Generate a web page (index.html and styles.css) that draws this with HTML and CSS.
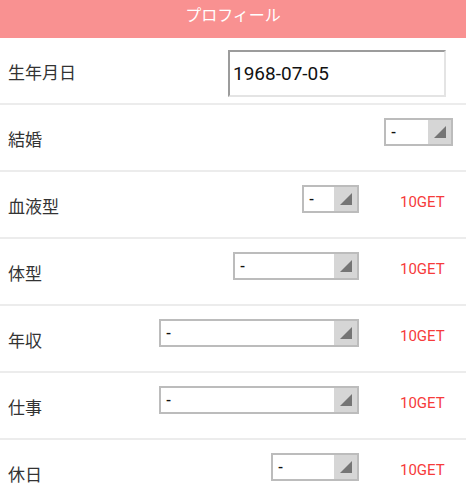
FILE: index.html
```html
<!DOCTYPE html>
<html lang="ja">
<head>
<meta charset="utf-8">
<link rel="stylesheet" href="styles.css">
</head>
<body>
<div class="header">プロフィール</div>
<div class="row">
  <div class="label">生年月日</div>
  <div class="field"><div class="input">1968-07-05</div></div>
</div>
<div class="row">
  <div class="label">結婚</div>
  <div class="field pad-r"><div class="sel" style="width:69px"><span class="val">-</span><span class="arr"><svg width="12" height="12" viewBox="0 0 12 12"><polygon points="12,0 12,12 0,12" fill="#757575"/></svg></span></div></div>
</div>
<div class="row">
  <div class="label">血液型</div>
  <div class="field"><div class="sel" style="width:57px"><span class="val">-</span><span class="arr"><svg width="12" height="12" viewBox="0 0 12 12"><polygon points="12,0 12,12 0,12" fill="#757575"/></svg></span></div></div>
  <div class="get">10GET</div>
</div>
<div class="row">
  <div class="label">体型</div>
  <div class="field"><div class="sel" style="width:126px"><span class="val">-</span><span class="arr"><svg width="12" height="12" viewBox="0 0 12 12"><polygon points="12,0 12,12 0,12" fill="#757575"/></svg></span></div></div>
  <div class="get">10GET</div>
</div>
<div class="row">
  <div class="label">年収</div>
  <div class="field"><div class="sel" style="width:200px"><span class="val">-</span><span class="arr"><svg width="12" height="12" viewBox="0 0 12 12"><polygon points="12,0 12,12 0,12" fill="#757575"/></svg></span></div></div>
  <div class="get">10GET</div>
</div>
<div class="row">
  <div class="label">仕事</div>
  <div class="field"><div class="sel" style="width:200px"><span class="val">-</span><span class="arr"><svg width="12" height="12" viewBox="0 0 12 12"><polygon points="12,0 12,12 0,12" fill="#757575"/></svg></span></div></div>
  <div class="get">10GET</div>
</div>
<div class="row">
  <div class="label">休日</div>
  <div class="field"><div class="sel" style="width:88px"><span class="val">-</span><span class="arr"><svg width="12" height="12" viewBox="0 0 12 12"><polygon points="12,0 12,12 0,12" fill="#757575"/></svg></span></div></div>
  <div class="get">10GET</div>
</div>
</body>
</html>
```
FILE: styles.css
```css
html, body {
  margin: 0;
  padding: 0;
  background: #ffffff;
}
body {
  width: 466px;
  font-family: Roboto, "Noto Sans CJK JP", sans-serif;
  color: #333333;
}
.header {
  height: 38px;
  background: #f99191;
  color: #ffffff;
  font-size: 16px;
  line-height: 31px;
  text-align: center;
  box-sizing: border-box;
}
.row {
  display: flex;
  align-items: center;
  height: 67px;
  box-sizing: border-box;
  border-bottom: 2px solid #ececec;
}
.label {
  padding-left: 8px;
  font-size: 17px;
  color: #333333;
  flex: 0 0 auto;
  padding-top: 1px;
}
.field {
  flex: 1 1 auto;
  display: flex;
  justify-content: flex-end;
}
.field.pad-r {
  padding-right: 13px;
  margin-bottom: 12px;
}
.input {
  width: 218px;
  height: 47px;
  box-sizing: border-box;
  border: 2px solid;
  border-color: #9c9c9c #e4e4e4 #e4e4e4 #9c9c9c;
  margin-right: 20px;
  margin-top: 5px;
  font-size: 19px;
  color: #111111;
  line-height: 43px;
  padding-left: 3px;
}
.sel {
  display: flex;
  height: 28px;
  box-sizing: border-box;
  border: 2px solid #bcbcbc;
  background: #ffffff;
  margin-bottom: 12px;
}
.field.pad-r .sel {
  margin-bottom: 0;
}
.val {
  flex: 1 1 auto;
  font-size: 15px;
  font-weight: 500;
  line-height: 24px;
  padding-left: 5px;
  color: #111111;
}
.arr {
  flex: 0 0 23px;
  background: #d6d6d6;
  display: flex;
  align-items: flex-end;
  justify-content: flex-end;
  padding: 0 5px 6px 0;
  box-sizing: border-box;
}
.arr svg {
  display: block;
}
.get {
  flex: 0 0 107px;
  box-sizing: border-box;
  padding-left: 41px;
  font-size: 15px;
  color: #f63b3b;
  margin-bottom: 6px;
}
```
